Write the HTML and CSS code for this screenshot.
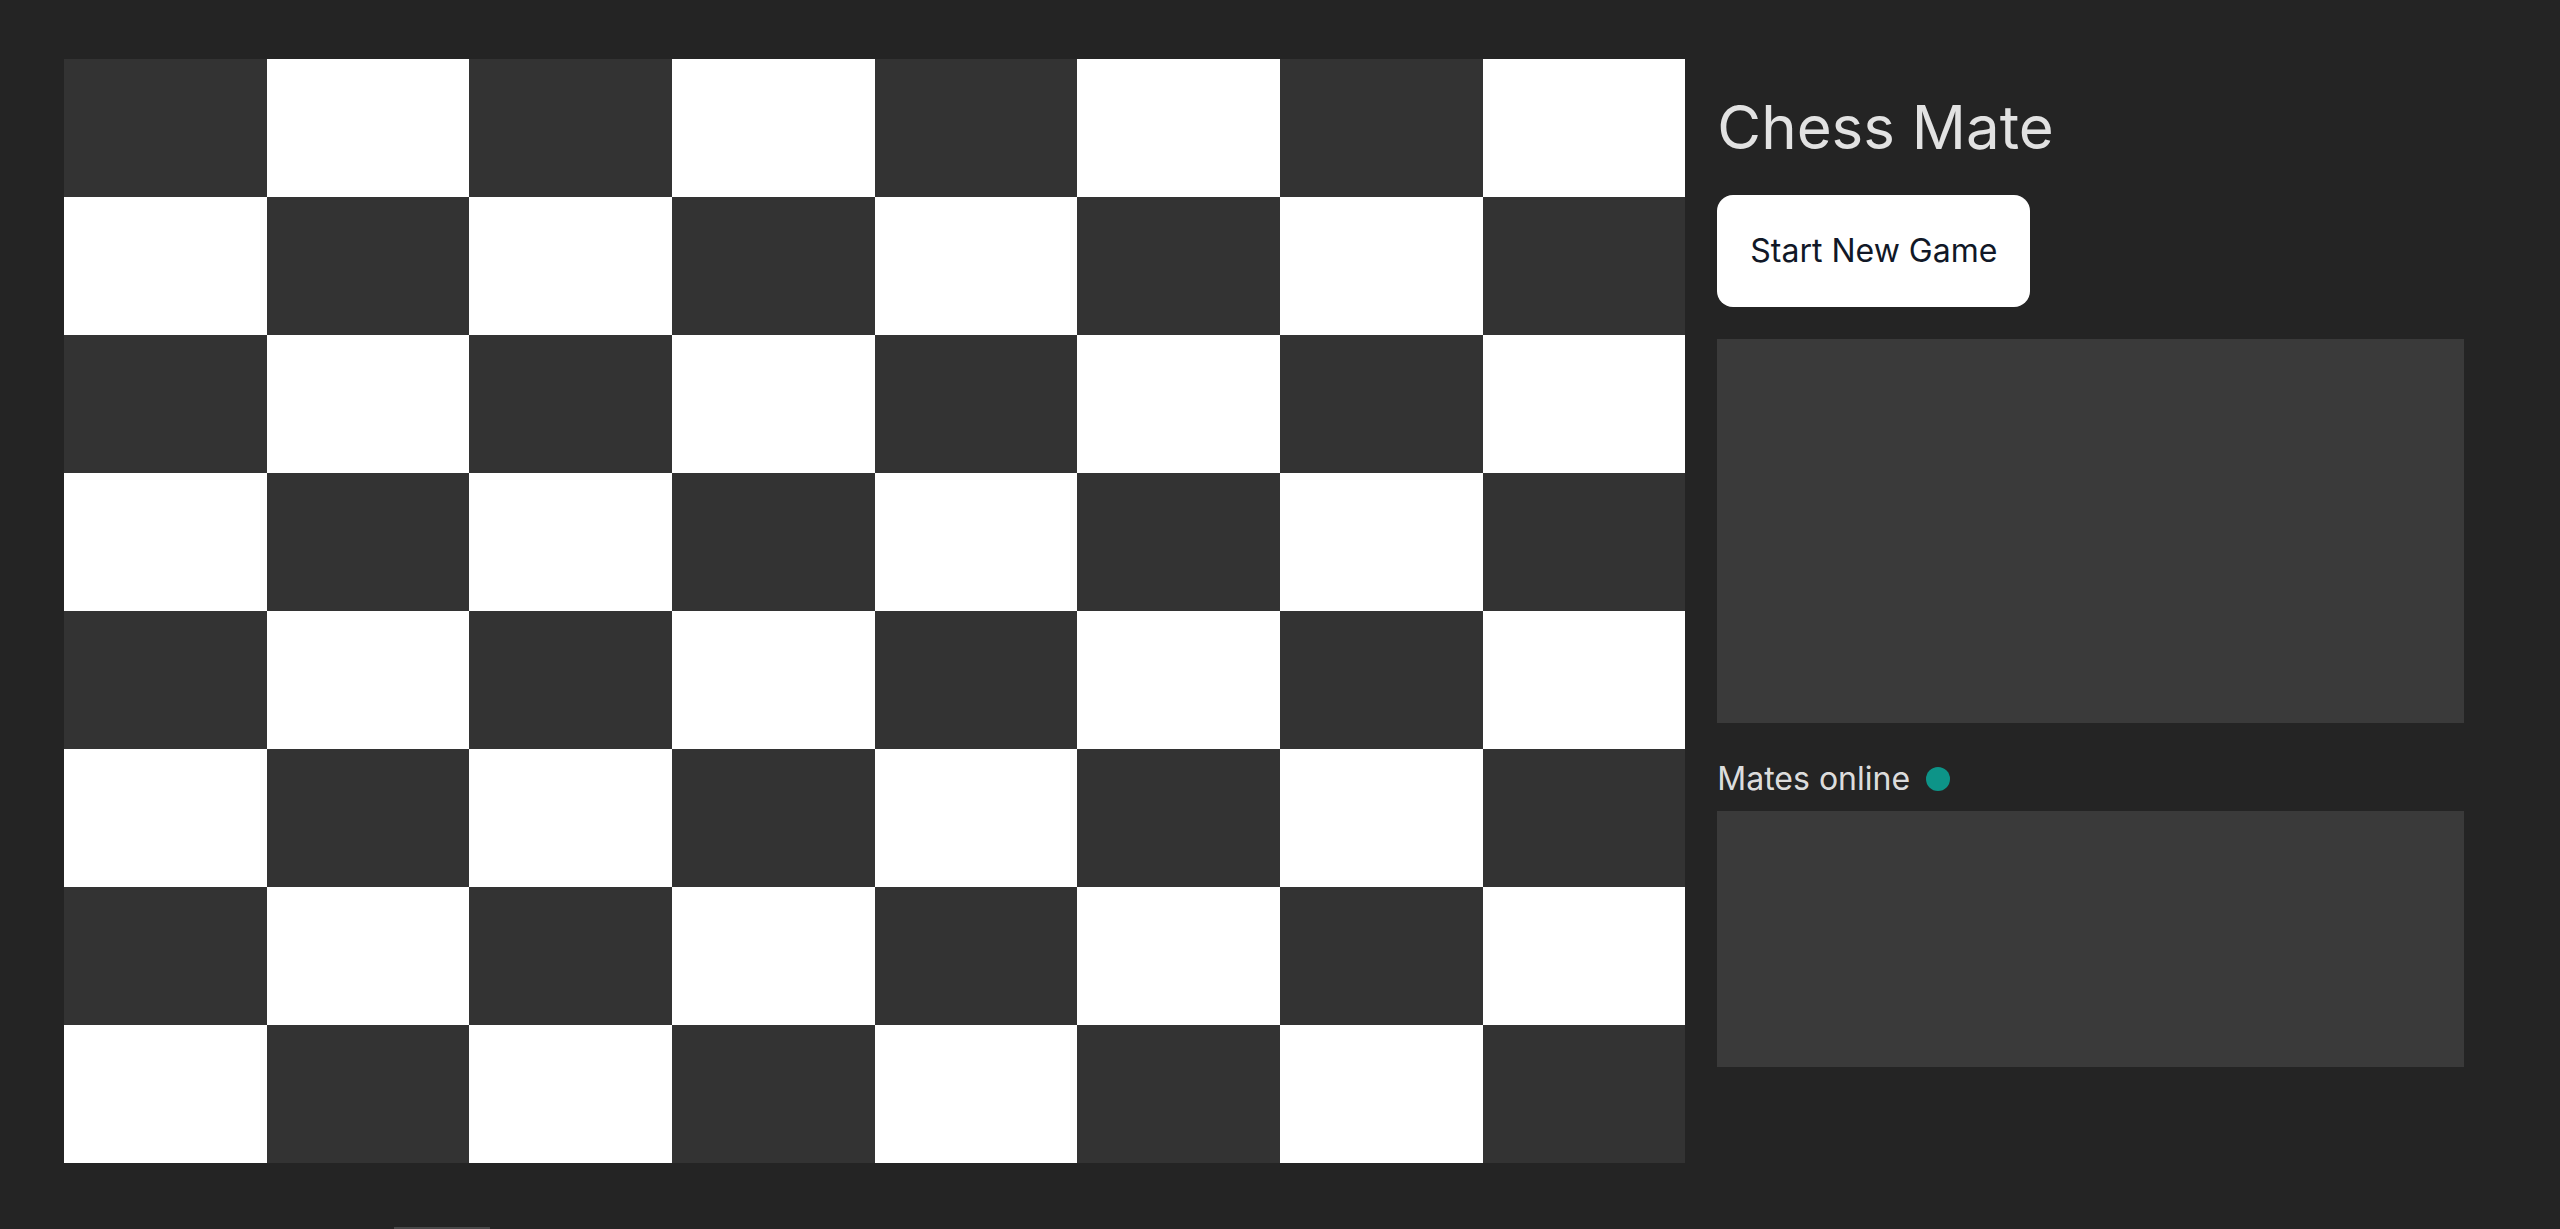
FILE: index.html
```html
<!DOCTYPE html>
<html lang="en">
<head>
<meta charset="utf-8">
<title>Chess Mate</title>
<link rel="stylesheet" href="styles.css">
</head>
<body>
<div class="page">
  <main class="layout">
    <section class="board">
      <div class="sq d"></div><div class="sq l"></div><div class="sq d"></div><div class="sq l"></div><div class="sq d"></div><div class="sq l"></div><div class="sq d"></div><div class="sq l"></div>
      <div class="sq l"></div><div class="sq d"></div><div class="sq l"></div><div class="sq d"></div><div class="sq l"></div><div class="sq d"></div><div class="sq l"></div><div class="sq d"></div>
      <div class="sq d"></div><div class="sq l"></div><div class="sq d"></div><div class="sq l"></div><div class="sq d"></div><div class="sq l"></div><div class="sq d"></div><div class="sq l"></div>
      <div class="sq l"></div><div class="sq d"></div><div class="sq l"></div><div class="sq d"></div><div class="sq l"></div><div class="sq d"></div><div class="sq l"></div><div class="sq d"></div>
      <div class="sq d"></div><div class="sq l"></div><div class="sq d"></div><div class="sq l"></div><div class="sq d"></div><div class="sq l"></div><div class="sq d"></div><div class="sq l"></div>
      <div class="sq l"></div><div class="sq d"></div><div class="sq l"></div><div class="sq d"></div><div class="sq l"></div><div class="sq d"></div><div class="sq l"></div><div class="sq d"></div>
      <div class="sq d"></div><div class="sq l"></div><div class="sq d"></div><div class="sq l"></div><div class="sq d"></div><div class="sq l"></div><div class="sq d"></div><div class="sq l"></div>
      <div class="sq l"></div><div class="sq d"></div><div class="sq l"></div><div class="sq d"></div><div class="sq l"></div><div class="sq d"></div><div class="sq l"></div><div class="sq d"></div>
    </section>
    <aside class="panel">
      <h1 class="title">Chess Mate</h1>
      <button class="btn" type="button">Start New Game</button>
      <div class="box box-moves"></div>
      <div class="label-row">
        <span class="label">Mates online</span>
        <span class="dot"></span>
      </div>
      <div class="box box-mates"></div>
    </aside>
  </main>
  <div class="below">
    <div class="below-item"></div>
  </div>
</div>
</body>
</html>
```

FILE: styles.css
```css
html, body {
  margin: 0;
  padding: 0;
  background: #242424;
}

body {
  font-family: Inter, "Noto Sans", "Liberation Sans", sans-serif;
  color: rgba(255, 255, 255, 0.87);
}

.page {
  padding: 59px 64px 0 64px;
}

.layout {
  display: grid;
  grid-template-columns: 2fr 1fr;
  align-items: start;
}

.board {
  display: grid;
  grid-template-columns: repeat(8, 1fr);
  grid-auto-rows: 138px;
}

.sq.d { background: #333333; }
.sq.l { background: #ffffff; }

.panel {
  padding: 32px;
  display: flex;
  flex-direction: column;
  align-items: flex-start;
}

.title {
  margin: 0;
  font-size: 60px;
  line-height: 72px;
  font-weight: 400;
  color: rgba(255, 255, 255, 0.87);
}

.btn {
  margin-top: 32px;
  border: none;
  background: #ffffff;
  color: #111827;
  font-family: Inter, "Noto Sans", "Liberation Sans", sans-serif;
  font-size: 32px;
  line-height: 48px;
  font-weight: 400;
  padding: 32px 33px;
  border-radius: 16px;
  cursor: pointer;
}

.box {
  align-self: stretch;
  background: #3a3a3a;
}

.box-moves {
  margin-top: 32px;
  height: 384px;
}

.label-row {
  margin-top: 32px;
  display: flex;
  align-items: center;
  gap: 16px;
  height: 48px;
}

.label {
  font-size: 32px;
  line-height: 48px;
  color: rgba(255, 255, 255, 0.87);
}

.dot {
  width: 24px;
  height: 24px;
  border-radius: 50%;
  background: #0d9488;
}

.box-mates {
  margin-top: 8px;
  height: 256px;
}

.below {
  margin-top: 64px;
  padding-left: 330px;
}

.below-item {
  width: 96px;
  height: 40px;
  background: #484848;
}
```
